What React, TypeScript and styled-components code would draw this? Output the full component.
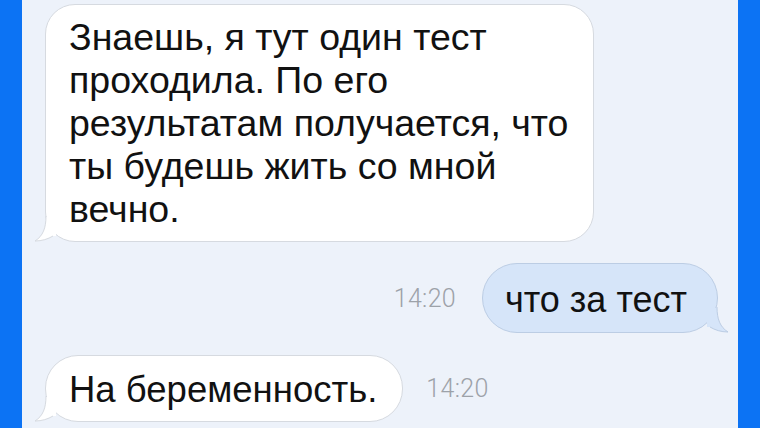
import styled, { createGlobalStyle } from 'styled-components';

const GlobalStyle = createGlobalStyle`
html, body {
	margin: 0;
	padding: 0;
	width: 760px;
	height: 428px;
	overflow: hidden;
}
`;

const Frame = styled.div`
display: flex;
width: 760px;
height: 428px;
padding: 0 22px;
box-sizing: border-box;
background-color: #0c73f4;
`;

const Chat = styled.main`
flex: 1;
display: flex;
flex-flow: column nowrap;
padding: 4px 20px 0 23px;
background-color: #edf2fa;
font-family: "Liberation Sans", Arial, sans-serif;
color: #111;
overflow: hidden;
`;

const Row = styled.div<{ $out?: boolean, $gap: number, $space: number }>`
display: flex;
align-items: center;
justify-content: ${p => p.$out ? 'flex-end' : 'flex-start'};
gap: ${p => p.$gap}px;
margin-bottom: ${p => p.$space}px;
`;

const Bubble = styled.div<{ $out?: boolean, $radius: number, $size: number }>`
position: relative;
box-sizing: border-box;
font-size: ${p => p.$size}px;
line-height: 43px;
border-radius: ${p => p.$radius}px;
border: 1px solid ${p => p.$out ? '#bccde4' : '#d6dae0'};
background-color: ${p => p.$out ? '#d6e5f9' : '#ffffff'};
white-space: nowrap;
`;

const LongBubble = styled(Bubble)`
width: 549px;
padding: 11px 22px 10px 23px;
`;

const ShortBubble = styled(Bubble)`
height: ${p => p.$out ? 70 : 67}px;
display: flex;
align-items: center;
padding: ${p => p.$out ? '2px 30px 0 22px' : '1px 25px 0 23px'};
`;

const Tail = styled.svg<{ $out?: boolean }>`
position: absolute;
bottom: -1px;
width: 22px;
height: 26px;
${p => p.$out ? 'right: -12px;' : 'left: -12px; transform: scaleX(-1);'}
`;

const Time = styled.span`
font-family: Roboto, "Liberation Sans", sans-serif;
font-weight: 300;
font-size: 25px;
color: #9da2a9;
letter-spacing: 0.3px;
`;

// tail drawn for an outgoing bubble; incoming ones mirror it
const BubbleTail = ({ out }: { out?: boolean }) => (
	<Tail $out={out} viewBox="0 0 22 26">
		<path d="M0 1 L10 1 C10 12 13 20 21 25 C14 25 8 23 3 20 L0 20 Z" fill={out ? '#d6e5f9' : '#ffffff'}/>
		<path d="M10 0 C10 12 13 20 21 25 C14 25 8 23 3 20" fill="none" stroke={out ? '#bccde4' : '#d6dae0'} strokeWidth="1"/>
	</Tail>
);

const App = () => {
	return (
		<>
			<GlobalStyle/>
			<Frame>
				<Chat>
					<Row $gap={0} $space={21}>
						<LongBubble $radius={30} $size={37.5}>
							Знаешь, я тут один тест<br/>
							проходила. По его<br/>
							результатам получается, что<br/>
							ты будешь жить со мной<br/>
							вечно.
							<BubbleTail/>
						</LongBubble>
					</Row>
					<Row $out $gap={26} $space={22}>
						<Time>14:20</Time>
						<ShortBubble $out $radius={35} $size={36}>
							что за тест
							<BubbleTail out/>
						</ShortBubble>
					</Row>
					<Row $gap={23} $space={0}>
						<ShortBubble $radius={33} $size={36.5}>
							На беременность.
							<BubbleTail/>
						</ShortBubble>
						<Time>14:20</Time>
					</Row>
				</Chat>
			</Frame>
		</>
	);
};

export default App;
